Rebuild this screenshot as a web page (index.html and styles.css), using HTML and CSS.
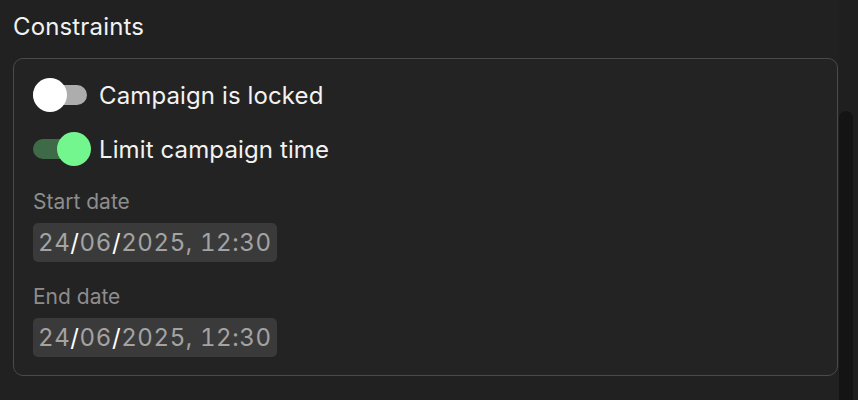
FILE: index.html
```html
<!DOCTYPE html>
<html lang="en">
    <head>
        <meta charset="utf-8">
        <link rel="stylesheet" href="styles.css">
    </head>
    <body>
        <div class="panel">
            <div class="panel-body">
                <h2 class="section-title">Constraints</h2>
                <div class="constraint-box">
                    <label class="toggle-row">
                        <span class="switch"><span class="knob"></span></span>
                        <span class="toggle-text">Campaign is locked</span>
                    </label>
                    <label class="toggle-row">
                        <span class="switch on"><span class="knob"></span></span>
                        <span class="toggle-text">Limit campaign time</span>
                    </label>

                    <div class="field">
                        <div class="field-label">Start date</div>
                        <div class="date-input">24<i>/</i>06<i>/</i>2025, 12:30</div>
                    </div>
                    <div class="field">
                        <div class="field-label">End date</div>
                        <div class="date-input">24<i>/</i>06<i>/</i>2025, 12:30</div>
                    </div>
                </div>
            </div>
            <div class="scroll-track">
                <div class="scroll-thumb"></div>
            </div>
        </div>
    </body>
</html>
```

FILE: styles.css
```css
html, body {
    margin: 0;
    height: 100%;
    background: #212121;
}
body {
    font-family: Inter, "Noto Sans", sans-serif;
    color: #f2f2f2;
    overflow: hidden;
}
.panel {
    display: flex;
    height: 100%;
}
.panel-body {
    flex: 1;
    padding: 12px 1px 0 13px;
}
.section-title {
    margin: 0 0 16px;
    font-size: 24px;
    font-weight: 400;
    line-height: 30px;
    letter-spacing: 0.15px;
}
.constraint-box {
    border: 1px solid #4a4a4a;
    border-radius: 10px;
    background: #232323;
    padding: 19px 19px 18px;
}

.toggle-row {
    display: flex;
    align-items: center;
    gap: 12px;
    height: 34px;
}
.toggle-row + .toggle-row {
    margin-top: 20px;
}
.switch {
    position: relative;
    width: 54px;
    height: 20px;
    border-radius: 10px;
    background: #adadad;
}
.switch .knob {
    position: absolute;
    left: 0;
    top: -7px;
    width: 34px;
    height: 34px;
    border-radius: 50%;
    background: #ffffff;
}
.switch.on {
    background: #3f6a47;
}
.switch.on .knob {
    left: 24px;
    background: #74f68f;
}
.toggle-text {
    font-size: 24px;
    font-weight: 400;
    letter-spacing: 0.12px;
}

.field {
    margin-top: 22px;
}
.toggle-row + .field {
    margin-top: 23px;
}
.field-label {
    font-size: 21px;
    color: #8d8d8d;
    line-height: 26px;
    margin-bottom: 8px;
}
.date-input {
    display: inline-block;
    background: #3a3a3a;
    border-radius: 5px;
    height: 39px;
    line-height: 39px;
    padding: 0 5px;
    font-size: 24px;
    letter-spacing: 0.6px;
    font-variant-numeric: tabular-nums;
    color: #a3a3a3;
}
.date-input i {
    font-style: normal;
    color: #ffffff;
}

.scroll-track {
    width: 19px;
    padding-top: 111px;
    background: #1f1f1f;
    box-sizing: border-box;
}
.scroll-thumb {
    width: 14px;
    height: 100%;
    border-radius: 7px 7px 0 0;
    background: #141414;
}
```
